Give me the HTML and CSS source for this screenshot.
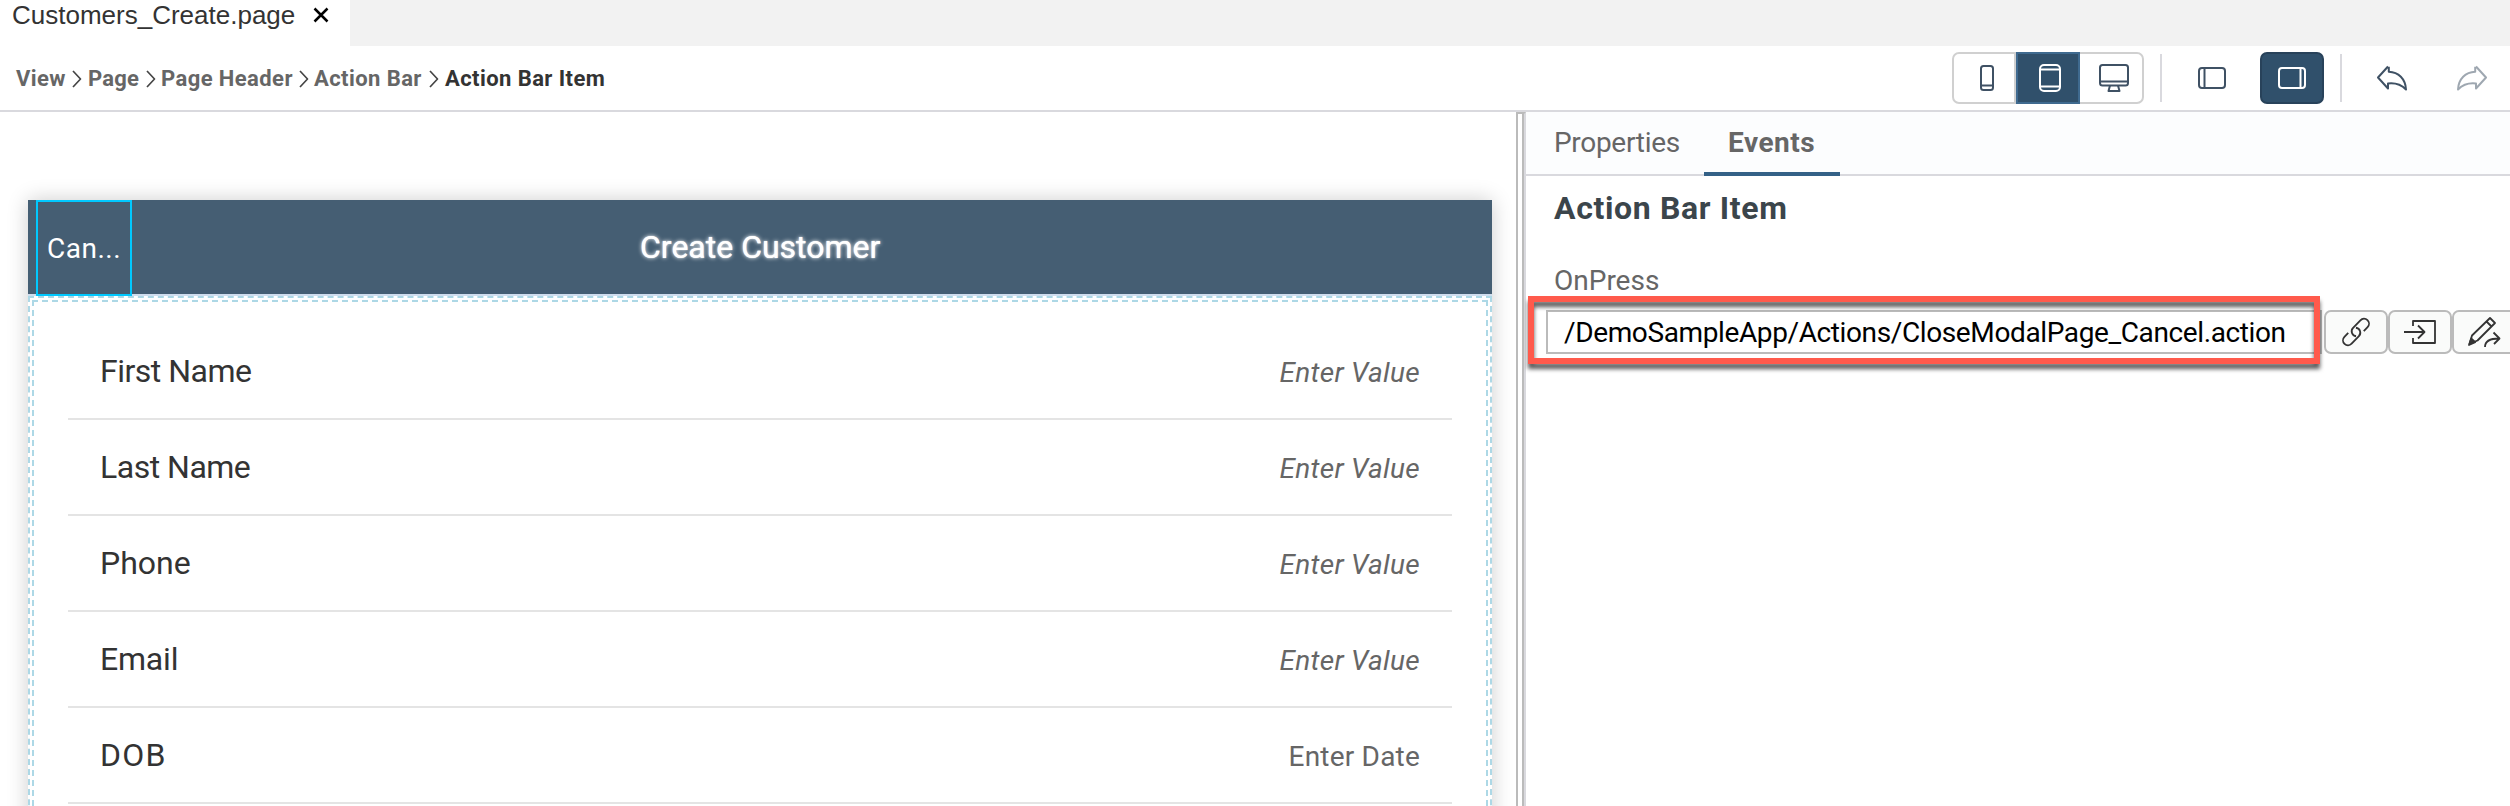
FILE: index.html
```html
<!DOCTYPE html>
<html lang="en">
<head>
<meta charset="utf-8">
<title>Customers_Create.page</title>
<link rel="stylesheet" href="styles.css">
</head>
<body>
<div class="app">
  <div class="tabstrip">
    <div class="file-tab"><span class="file-name">Customers_Create.page</span>
      <svg class="close" width="16" height="16" viewBox="0 0 16 16"><path d="M1.5 1.5L14.5 14.5M14.5 1.5L1.5 14.5"/></svg>
    </div>
  </div>
  <header class="toolbar">
    <nav class="crumbs">
      <span class="c1">View</span><svg class="chev" viewBox="0 0 10 18"><path d="M1 1L8.500 9L1 17"/></svg>
      <span class="c2">Page</span><svg class="chev" viewBox="0 0 10 18"><path d="M1 1L8.500 9L1 17"/></svg>
      <span class="c3">Page Header</span><svg class="chev" viewBox="0 0 10 18"><path d="M1 1L8.500 9L1 17"/></svg>
      <span class="c4">Action Bar</span><svg class="chev" viewBox="0 0 10 18"><path d="M1 1L8.500 9L1 17"/></svg>
      <span class="c5">Action Bar Item</span>
    </nav>
    <div class="tools">
      <div class="segmented">
        <span class="seg phone"><svg width="16" height="28" viewBox="0 0 16 28"><rect x="2" y="2" width="12" height="24" rx="2.500"/><path d="M2 21.500H14"/></svg></span>
        <span class="seg on"><svg width="24" height="28" viewBox="0 0 24 28"><rect x="2" y="1" width="20" height="26" rx="4"/><path d="M2 5.500H22M2 22.500H22"/></svg></span>
        <span class="seg desktop"><svg width="30" height="28" viewBox="0 0 30 28"><rect x="1" y="1" width="28" height="20.500" rx="2.500"/><path d="M1 17.500H29M11 21.500L9.500 27H20.500L19 21.500"/></svg></span>
      </div>
      <i class="sep"></i>
      <span class="tool"><svg width="28" height="22" viewBox="0 0 28 22"><rect x="1" y="1" width="26" height="20" rx="3"/><path d="M6.500 1V21"/></svg></span>
      <span class="tool pressed"><svg width="28" height="22" viewBox="0 0 28 22"><rect x="1" y="1" width="26" height="20" rx="3"/><path d="M22.500 1V21"/></svg></span>
      <i class="sep second"></i>
      <span class="tool undo"><svg width="32" height="26" viewBox="0 0 32 26"><path d="M12 1.500L2 12.500L12 23.500V18.500C20 17.500 25 19.500 30 24.500C29.500 14 22.500 7 12.800 6.700V1.800"/></svg></span>
      <span class="tool redo"><svg width="32" height="26" viewBox="0 0 32 26"><path d="M20 1.500L30 12.500L20 23.500V18.500C12 17.500 7 19.500 2 24.500C2.500 14 9.500 7 19.200 6.700V1.800"/></svg></span>
    </div>
  </header>
  <main class="work">
    <section class="stage">
      <div class="page">
        <div class="page-head">
          <div class="bar-item"><span>Can...</span></div>
          <h1>Create Customer</h1>
        </div>
        <div class="drop-outer"><div class="drop-inner">
          <div class="row"><span class="label l1">First Name</span><em>Enter Value</em></div>
          <div class="row"><span class="label l1">Last Name</span><em>Enter Value</em></div>
          <div class="row"><span class="label">Phone</span><em>Enter Value</em></div>
          <div class="row"><span class="label l4">Email</span><em>Enter Value</em></div>
          <div class="row"><span class="label l5">DOB</span><span class="date">Enter Date</span></div>
        </div></div>
      </div>
    </section>
    <div class="splitter"></div>
    <aside class="panel">
      <div class="panel-tabs"><span class="ptab">Properties</span><span class="ptab active">Events</span></div>
      <h2>Action Bar Item</h2>
      <div class="field-label">OnPress</div>
      <div class="field">
        <div class="input"><span>/DemoSampleApp/Actions/CloseModalPage_Cancel.action</span><div class="highlight"></div></div>
        <span class="fbtn"><svg width="28" height="28" viewBox="0 0 28 28"><g transform="translate(14 14) rotate(-46)"><path d="M6 5H11.500A5 5 0 0 0 11.500 -5H1A5 5 0 0 0 -3 3"/><path d="M-6 -5H-11.500A5 5 0 0 0 -11.500 5H-1A5 5 0 0 0 3 -3"/></g></svg></span>
        <span class="fbtn"><svg width="32" height="26" viewBox="0 0 32 26"><path d="M9 7V2H31V24H9V19M0 13H20M14 6.500L20.500 13L14 19.500"/></svg></span>
        <span class="fbtn"><svg width="32" height="30" viewBox="0 0 32 30"><path d="M1.500 27L4 18.500L22 1L27 6L9.500 23.500ZM18.500 4.500L23.500 9.500"/><path class="solid" d="M1 28L3.200 21.500L7.200 25.200Z"/><path d="M17 30C17 24 22 21.500 31 21.500M25.500 15.500L31.500 21.500L26 27"/></svg></span>
      </div>
    </aside>
  </main>
</div>
</body>
</html>
```

FILE: styles.css
```css
* { box-sizing: border-box; }
body { margin: 0; background: #fff; font-family: Roboto, "Noto Sans", sans-serif; }
svg { display: block; fill: none; stroke: #3f5164; stroke-width: 2; stroke-linejoin: round; flex: none; overflow: visible; }
.app { width: 2510px; height: 806px; overflow: hidden; display: flex; flex-direction: column; }

.tabstrip { height: 46px; background: #f2f2f2; flex: none; }
.file-tab { width: 350px; height: 46px; background: #fff; display: flex; align-items: flex-start; padding-left: 12px; }
.file-name { font: 26px/30px "Liberation Sans", Arial, sans-serif; color: #333; width: 301px; white-space: nowrap; }
.close { margin-top: 7px; stroke: #000; stroke-width: 2.5; }

.toolbar { height: 66px; flex: none; border-bottom: 2px solid #d9d9de; display: flex; justify-content: space-between; }
.crumbs { display: flex; padding: 21px 0 0 16px; font-size: 22px; line-height: 24px; font-weight: 700; color: #666; white-space: nowrap; letter-spacing: .42px; }
.chev { width: 10px; height: 18px; margin-top: 3px; stroke: #444; stroke-width: 1.7; }
.c1 { width: 56px; }
.c2 { width: 58px; margin-left: 6px; letter-spacing: .2px; }
.c3 { width: 138px; margin-left: 5px; }
.c4 { width: 115px; margin-left: 5px; }
.c5 { margin-left: 6px; color: #333; }

.tools { display: flex; padding-top: 6px; width: 558px; }
.segmented { width: 192px; height: 52px; border: 2px solid #d0d0d0; border-radius: 7px; display: flex; flex: none; }
.seg { width: 62px; height: 48px; display: flex; align-items: center; justify-content: center; }
.phone { border-right: 2px solid #d0d0d0; padding-left: 5px; }
.seg.on { width: 64px; height: 52px; margin-top: -2px; background: #30506b; border: 2px solid #3f6a8f; padding-left: 3px; }
.seg.on svg { stroke: #fff; }
.desktop { padding-left: 6px; }
.sep { width: 2px; height: 48px; margin: 2px 0 0 16px; background: #d9d9de; flex: none; }
.tool { width: 64px; height: 52px; margin-left: 18px; display: flex; align-items: center; justify-content: center; flex: none; }
.pressed { background: #30506b; border: 2px solid #28425a; border-radius: 7px; margin-left: 16px; }
.pressed svg { stroke: #fff; }
.undo { margin-left: 18px; }
.redo { margin-left: 16px; opacity: .5; }

.work { flex: 1; min-height: 0; display: flex; }
.stage { width: 1516px; flex: none; padding: 88px 24px 0 28px; overflow: hidden; }
.page { height: 640px; box-shadow: 0 0 20px rgba(0,0,0,.2); background: #fff; }
.page-head { height: 96px; background: #455e73; border-bottom: 2px solid #d0deee; display: grid; grid-template-columns: 612px 1fr; }
.bar-item { width: 96px; height: 96px; margin-left: 8px; border: 2px solid #00c8ff; color: #fff; font-size: 28px; line-height: 94px; padding-left: 9px; letter-spacing: .5px; }
h1 { margin: 0; color: #fff; font-size: 32px; line-height: 94px; font-weight: 400; text-shadow: 0 0 4px #fff, 0 0 1px #fff; white-space: nowrap; }
.drop-outer { height: 640px; border: 2px dashed #add8e6; padding: 2px; }
.drop-inner { height: 636px; border: 2px dashed #add8e6; padding: 22px 34px 0; }
.row { height: 96px; border-bottom: 2px solid #e4e4e4; display: flex; align-items: center; justify-content: space-between; padding: 0 32px; color: #666; font-size: 28px; }
.row em { letter-spacing: .3px; padding-top: 2px; }
.date { letter-spacing: .2px; padding-top: 2px; }
.label { color: #333; font-size: 32px; }
.l1 { letter-spacing: -.5px; }
.l4 { letter-spacing: -.2px; }
.l5 { letter-spacing: 1.2px; }

.splitter { width: 10px; flex: none; border: 2px solid #bbb; border-bottom: 0; border-right-color: #d9d9de; box-shadow: inset -2px 0 #bbb; }
.panel { width: 984px; flex: none; white-space: nowrap; }
.panel-tabs { height: 64px; background: #fcfdfe; border-bottom: 2px solid #d9d9de; display: flex; padding-left: 28px; font-size: 28px; line-height: 62px; color: #666; }
.ptab { height: 64px; width: 150px; letter-spacing: -.3px; }
.ptab.active { width: 136px; padding-left: 24px; font-weight: 700; letter-spacing: .5px; border-bottom: 4px solid #346187; }
h2 { margin: 13px 0 0 28px; font-size: 32px; line-height: 38px; font-weight: 700; color: #3b454b; letter-spacing: .65px; }
.field-label { margin: 36px 0 0 28px; height: 47px; font-size: 28px; line-height: 36px; color: #666; }
.field { display: flex; margin-left: 20px; height: 44px; }
.input { position: relative; width: 776px; height: 44px; flex: none; border: 2px solid #bbb; font-size: 28px; line-height: 42px; color: #000; padding-left: 16px; letter-spacing: -.38px; }
.highlight { position: absolute; left: -20px; top: -16px; width: 792px; height: 68px; border: 6px solid #ff5a4c; filter: drop-shadow(0 5px 2px rgba(0,0,0,.65)); }
.fbtn { width: 64px; height: 44px; flex: none; border: 2px solid #bbb; border-radius: 7px; background: #fafbfa; display: flex; align-items: center; justify-content: center; }
.input + .fbtn { margin-left: 2px; }
.fbtn svg { stroke: #333; stroke-width: 1.8; }
.fbtn .solid { fill: #333; }
```
